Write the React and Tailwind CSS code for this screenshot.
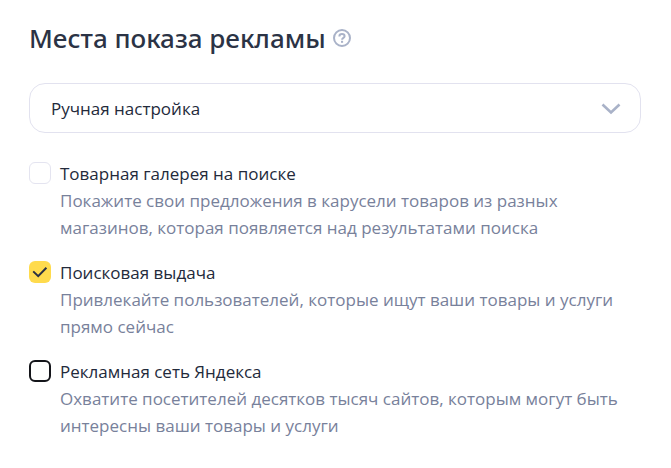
import { useState } from "react";

const MODES = ["Ручная настройка", "Автоматическая настройка"];

const PLACES = [
  {
    id: "gallery",
    title: "Товарная галерея на поиске",
    description:
      "Покажите свои предложения в карусели товаров из разных магазинов, которая появляется над результатами поиска",
    box: "border border-[#e4e4f0]",
  },
  {
    id: "search",
    title: "Поисковая выдача",
    description:
      "Привлекайте пользователей, которые ищут ваши товары и услуги прямо сейчас",
    box: "border border-[#e4e4f0]",
  },
  {
    id: "network",
    title: "Рекламная сеть Яндекса",
    description:
      "Охватите посетителей десятков тысяч сайтов, которым могут быть интересны ваши товары и услуги",
    box: "border-2 border-[#14151a]",
  },
];

function HelpIcon() {
  return (
    <svg
      className="size-5"
      viewBox="0 0 20 20"
      fill="none"
      stroke="#a9b2c8"
      strokeWidth="2"
      aria-hidden="true"
    >
      <circle cx="10" cy="10" r="8" />
      <path d="M7.4 8.4C7.4 6.9 8.5 6.1 10 6.1s2.6.8 2.6 2.2c0 1.7-2.5 1.5-2.5 3.5" />
      <path d="M9 13.8h2.1" />
    </svg>
  );
}

function Place({ place, checked, onChange }) {
  return (
    <li className="flex gap-[9px]">
      <span className="relative mt-0.5 size-[22px] shrink-0">
        <input
          id={place.id}
          type="checkbox"
          checked={checked}
          onChange={onChange}
          aria-describedby={`${place.id}-description`}
          className={`block size-full appearance-none rounded-md bg-white checked:border-0 checked:bg-[#ffdb4d] ${place.box}`}
        />
        {checked && (
          <svg
            className="pointer-events-none absolute inset-0"
            viewBox="0 0 22 22"
            fill="none"
            stroke="#2a3042"
            strokeWidth="2"
            aria-hidden="true"
          >
            <path d="M4.2 10.4 9.2 15.2 17.4 6.8" />
          </svg>
        )}
      </span>
      <div>
        <label htmlFor={place.id} className="block text-[#232a3b]">
          {place.title}
        </label>
        <p id={`${place.id}-description`} className="text-[#78819b]">
          {place.description}
        </p>
      </div>
    </li>
  );
}

export default function App() {
  const [mode, setMode] = useState(MODES[0]);
  const [selected, setSelected] = useState({ search: true });

  const toggle = (id) =>
    setSelected((current) => ({ ...current, [id]: !current[id] }));

  return (
    <main className="min-h-screen bg-white pt-5 pr-[30px] pb-7 pl-[29px] font-['Open_Sans','Noto_Sans',sans-serif] text-[17px] leading-[27px]">
      <header className="mb-[27px] flex items-center gap-1.5">
        <h1
          id="places-heading"
          className="font-['Noto_Sans',sans-serif] text-[26px] leading-9 font-medium text-[#2b3345]"
        >
          Места показа рекламы
        </h1>
        <button type="button" aria-label="Справка">
          <HelpIcon />
        </button>
      </header>

      <div className="relative mb-[27px]">
        <select
          value={mode}
          onChange={(event) => setMode(event.target.value)}
          aria-labelledby="places-heading"
          className="block h-[50px] w-full appearance-none rounded-2xl border border-[#e2e2ef] bg-white px-[21px] text-[#232a3b]"
        >
          {MODES.map((item) => (
            <option key={item}>{item}</option>
          ))}
        </select>
        <svg
          className="pointer-events-none absolute top-4 right-5 size-5"
          viewBox="0 0 20 20"
          fill="none"
          stroke="#a9b2c8"
          strokeWidth="2.6"
          aria-hidden="true"
        >
          <path d="M1.5 5.5 10 13.5 18.5 5.5" />
        </svg>
      </div>

      <ul className="space-y-[18px]">
        {PLACES.map((place) => (
          <Place
            key={place.id}
            place={place}
            checked={Boolean(selected[place.id])}
            onChange={() => toggle(place.id)}
          />
        ))}
      </ul>
    </main>
  );
}
